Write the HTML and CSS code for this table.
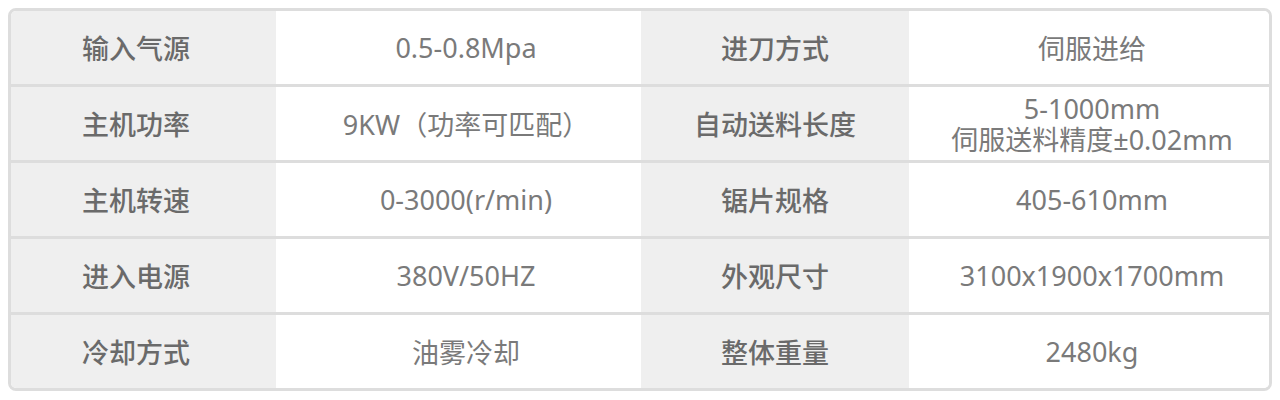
FILE: index.html
```html
<!DOCTYPE html>
<html lang="zh-CN">
<head>
<meta charset="utf-8">
<title>参数</title>
<link rel="stylesheet" href="styles.css">
</head>
<body>
<div class="spec">
  <div class="row">
    <div class="cell label l1">输入气源</div>
    <div class="cell value v1">0.5-0.8Mpa</div>
    <div class="cell label l2">进刀方式</div>
    <div class="cell value v2">伺服进给</div>
  </div>
  <div class="row">
    <div class="cell label l1">主机功率</div>
    <div class="cell value v1">9KW（功率可匹配）</div>
    <div class="cell label l2">自动送料长度</div>
    <div class="cell value v2 multi"><span class="line">5-1000mm</span><span class="line">伺服送料精度±0.02mm</span></div>
  </div>
  <div class="row">
    <div class="cell label l1">主机转速</div>
    <div class="cell value v1">0-3000(r/min)</div>
    <div class="cell label l2">锯片规格</div>
    <div class="cell value v2">405-610mm</div>
  </div>
  <div class="row">
    <div class="cell label l1">进入电源</div>
    <div class="cell value v1">380V/50HZ</div>
    <div class="cell label l2">外观尺寸</div>
    <div class="cell value v2">3100x1900x1700mm</div>
  </div>
  <div class="row">
    <div class="cell label l1">冷却方式</div>
    <div class="cell value v1">油雾冷却</div>
    <div class="cell label l2">整体重量</div>
    <div class="cell value v2">2480kg</div>
  </div>
</div>
</body>
</html>
```

FILE: styles.css
```css
html, body {
  margin: 0;
  padding: 0;
  background: #ffffff;
}

body {
  padding: 8px;
  font-family: "Noto Sans", "Noto Sans CJK SC", sans-serif;
  font-size: 27px;
}

.spec {
  width: 1264px;
  box-sizing: border-box;
  border: 3px solid #dddddd;
  border-radius: 8px;
  overflow: hidden;
}

.row {
  display: grid;
  grid-template-columns: 265px 365px 268px 360px;
  height: 73px;
}

.row + .row {
  border-top: 3px solid #dddddd;
}

.cell {
  display: flex;
  align-items: center;
  justify-content: center;
  text-align: center;
  white-space: nowrap;
}

.label {
  background: #efefef;
  color: #6a6a6a;
  font-family: "Noto Sans CJK SC", sans-serif;
  font-weight: 500;
}

.value {
  background: #ffffff;
  color: #7a7a7a;
  font-weight: 400;
}

.l1 {
  padding-right: 15px;
}

.v1 {
  padding-left: 15px;
}

.v2 {
  padding-left: 6px;
}

.multi {
  flex-direction: column;
}

.line {
  display: block;
  height: 31px;
  line-height: 31px;
}
```
